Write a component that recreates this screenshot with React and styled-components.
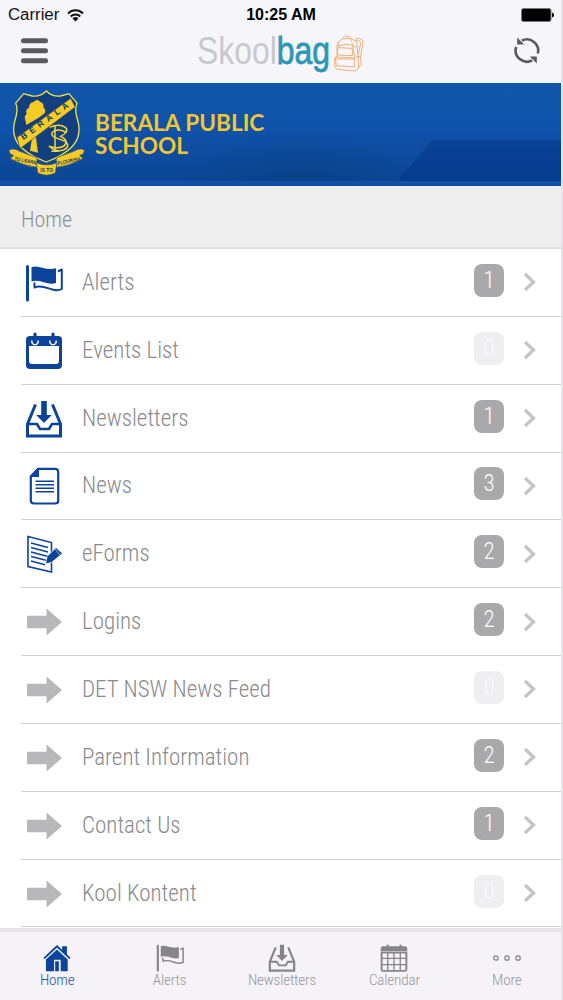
import styled, { createGlobalStyle } from 'styled-components';

const items = [
    { title: 'Alerts', icon: 'flag', count: 1 },
    { title: 'Events List', icon: 'events', count: 0 },
    { title: 'Newsletters', icon: 'inbox', count: 1 },
    { title: 'News', icon: 'page', count: 3 },
    { title: 'eForms', icon: 'form', count: 2 },
    { title: 'Logins', icon: 'arrow', count: 2 },
    { title: 'DET NSW News Feed', icon: 'arrow', count: 0 },
    { title: 'Parent Information', icon: 'arrow', count: 2 },
    { title: 'Contact Us', icon: 'arrow', count: 1 },
    { title: 'Kool Kontent', icon: 'arrow', count: 0 },
];

const tabs = [
    { title: 'Home', icon: 'home', active: true },
    { title: 'Alerts', icon: 'flag' },
    { title: 'Newsletters', icon: 'inbox' },
    { title: 'Calendar', icon: 'calendar' },
    { title: 'More', icon: 'more' },
];

const GlobalStyle = createGlobalStyle`
  * { box-sizing: border-box; }
  body {
    margin: 0;
    background: #fff;
    font-family: 'Roboto Condensed', Roboto, sans-serif;
    font-stretch: 75%;
    font-weight: 300;
    overflow: hidden;
  }
  svg { display: block; flex: none; }
`;

const Screen = styled.div`
  width: 563px;
  height: 1000px;
  display: flex;
  flex-direction: column;
  border-right: 2px solid #e6e4e7;
  overflow: hidden;
`;

const StatusBar = styled.div`
  height: 30px;
  flex: none;
  display: grid;
  grid-template-columns: 1fr auto 1fr;
  align-items: center;
  padding: 0 7px 0 8px;
  background: #f6f5f9;
  color: #111;
  font-family: 'Liberation Sans', sans-serif;
  font-stretch: normal;
  font-weight: 400;
  font-size: 16.8px;
`;

const Carrier = styled.div`
  display: flex;
  align-items: center;
  gap: 8px;
`;

const Clock = styled.div`
  font-family: 'Liberation Sans', sans-serif;
  font-weight: 600;
  font-size: 16px;
  color: #000;
`;

const Battery = styled.div`
  justify-self: end;
`;

const NavBar = styled.div`
  height: 53px;
  flex: none;
  display: grid;
  grid-template-columns: 1fr auto 1fr;
  align-items: start;
  padding: 0 20px 0 21px;
  background: #f6f5f9;
`;

const MenuButton = styled.div`
  padding-top: 8px;
`;

const RefreshButton = styled.div`
  padding-top: 6px;
  justify-self: end;
`;

const Brand = styled.div`
  display: flex;
  align-items: flex-start;
  gap: 3px;
  svg { margin-top: 5px; }
`;

const BrandText = styled.div`
  width: 133px;
  height: 44px;
  font-family: 'Liberation Sans', sans-serif;
  font-stretch: normal;
  font-weight: 400;
  font-size: 38px;
  line-height: 42px;
  white-space: nowrap;
  color: #c9c8cc;
  b {
    font-weight: 400;
    color: #2d97b7;
    -webkit-text-stroke: 0.8px #2d97b7;
  }
`;

const Narrow = styled.span`
  display: inline-block;
  transform: scaleX(${props => props.$scale});
  transform-origin: 0 50%;
`;

const Banner = styled.div`
  height: 103px;
  flex: none;
  display: flex;
  padding: 5px 0 0 8px;
  gap: 9px;
  border-bottom: 5px solid #1150a8;
  background:
    linear-gradient(130.5deg, transparent 72.4%, rgba(0, 45, 130, 0.4) 72.6%) 0 100% / 100% 41px no-repeat,
    radial-gradient(ellipse 120px 50px at 300px 98px, rgba(5, 55, 115, 0.35), transparent),
    linear-gradient(180deg, #1156aa 0%, #0f52aa 45%, #0c4694 100%);
`;

const SchoolName = styled.div`
  padding-top: 24px;
  font-family: Lato, sans-serif;
  font-stretch: normal;
  font-weight: 700;
  font-size: 22.6px;
  line-height: 22.5px;
  color: #f2c62e;
`;

const SectionTitle = styled.div`
  height: 63px;
  flex: none;
  display: flex;
  align-items: center;
  padding: 5px 0 0 21px;
  background: #efeeef;
  border-bottom: 2px solid #e0dfe0;
  color: #8f8e91;
  font-size: 22px;
`;

const List = styled.div`
  flex: 1;
  min-height: 0;
  overflow: hidden;
  padding-left: 21px;
  background: #fff;
`;

const Row = styled.div`
  height: 67.85px;
  display: flex;
  align-items: center;
  border-bottom: 1px solid #d3d2d4;
  padding-right: 25px;
  color: #8b8a8d;
`;

const RowIcon = styled.div`
  width: 61px;
  padding: 1px 0 0 4px;
  color: ${props => props.$grey ? '#b8b7b9' : '#0c439b'};
`;

const RowLabel = styled.div`
  flex: 1;
  font-size: 23px;
`;

const Badge = styled.div`
  width: 30px;
  height: 33px;
  margin: 0 19px 4px 0;
  border-radius: 8px;
  display: flex;
  align-items: center;
  justify-content: center;
  background: ${props => props.$empty ? '#efeef0' : '#a9a8aa'};
  color: ${props => props.$empty ? '#fbfbfc' : '#fff'};
  font-size: 23px;
`;

const TabBar = styled.div`
  height: 72px;
  width: 563px;
  flex: none;
  display: grid;
  grid-template-columns: repeat(5, 1fr);
  padding-left: 1px;
  background: #f5f3f7;
  border-top: 4px solid #e5e4e7;
`;

const Tab = styled.div`
  display: flex;
  flex-direction: column;
  align-items: center;
  padding-top: 12px;
  font-size: 15.2px;
  letter-spacing: -0.2px;
  line-height: 16px;
  color: ${props => props.$active ? '#2458a6' : '#98979b'};
  svg { color: ${props => props.$active ? '#0c439b' : '#868589'}; }
`;

const Icon = ({ name, size = 38 }) => (
    <svg width={size} height={size} viewBox="0 0 38 38" fill="none" stroke="currentColor">
        {name === 'flag' && (
            <>
                <path d="M2.5 2.500v33.500" strokeWidth="3" strokeLinecap="round" />
                <path d="M6.500 3.200c7-3 14 4 24.500 1v14.800c-9 3-15-4.500-24.500-1.500z" fill="currentColor" stroke="none" />
                <path d="M33 7.500l3.800-2v19.500c-9 5-17-6-27.300-1.500v-5" strokeWidth="2" strokeLinejoin="round" />
            </>
        )}
        {name === 'events' && (
            <>
                <path d="M5 4h28a4 4 0 0 1 4 4v25a4 4 0 0 1-4 4H5a4 4 0 0 1-4-4V8a4 4 0 0 1 4-4zM4 14v15q0 3 3 3h24q3 0 3-3V14z" fill="currentColor" fillRule="evenodd" stroke="none" />
                <path d="M7 8.500a3.200 3.200 0 1 0 6 0M25 8.500a3.200 3.200 0 1 0 6 0" stroke="#fff" strokeWidth="1.500" />
                <path d="M10 2v8M28 2v8" strokeWidth="3.200" strokeLinecap="round" />
            </>
        )}
        {name === 'inbox' && (
            <>
                <path d="M10.500 4.500L2.500 24v12h33V24L27.500 4.500" strokeWidth="3" />
                <path d="M2.500 24H12l3 5h9l3-5h8.500" strokeWidth="2.600" />
                <path d="M16.200 1h5.600v14h5L19 23l-7.800-8h5z" fill="currentColor" stroke="none" />
            </>
        )}
        {name === 'page' && (
            <>
                <path d="M13 1.800h17q3.200 0 3.200 3.200v29q0 2.500-3.200 2.500H9q-3.200 0-3.200-3V9.500z" strokeWidth="2.200" />
                <path d="M14 1v9H5z" fill="currentColor" stroke="none" />
                <path d="M10.500 14.200h18.500M10.500 17.700h18.500M10.500 21.200h18.500M10.500 24.700h18.500" strokeWidth="1.400" />
            </>
        )}
        {name === 'form' && (
            <>
                <path d="M3 1.500l23.500 6V37L3 31.500z" strokeWidth="1.600" />
                <path d="M6 8l17 4.500M6 12.500l17 4.500M6 17l17 4.500M6 21.500l16 4M6 26l14 3.800" strokeWidth="1.600" />
                <path d="M31 12.500l6.500 6-11 9-6 1.500 1.500-7.500z" fill="currentColor" stroke="#fff" strokeWidth="0.800" />
                <path d="M30 14l5 6" stroke="#fff" strokeWidth="0.600" />
            </>
        )}
        {name === 'arrow' && (
            <path d="M2 12.800h19.500V5.500L37 19 21.500 32.500v-7.300H2z" fill="currentColor" stroke="none" />
        )}
        {name === 'home' && (
            <>
                <path d="M26 3h6.500v13L26 10z" fill="currentColor" stroke="none" />
                <path d="M1.500 19.500L19 3l17.500 16.500" strokeWidth="2.600" />
                <path d="M19 7.500L33.500 21v16H24V21.500h-9V37H4V21z" fill="currentColor" stroke="none" />
                <path d="M16.500 23.500h5V37h-5z" fill="currentColor" stroke="none" />
            </>
        )}
        {name === 'calendar' && (
            <>
                <path d="M4 3h30a3 3 0 0 1 3 3v3.500H1V6a3 3 0 0 1 3-3z" fill="currentColor" stroke="none" />
                <path d="M10.500 1v4M28 1v4" strokeWidth="3" />
                <path d="M2.200 11.500h33.600v23q0 2-2 2H4.200q-2 0-2-2z" strokeWidth="2.600" />
                <path d="M2 19.500h34M2 28h34M10.500 12v24M19 12v24M27.500 12v24" strokeWidth="1.800" />
            </>
        )}
        {name === 'more' && (
            <g strokeWidth="1.700">
                <circle cx="4" cy="19" r="3" />
                <circle cx="19" cy="19" r="3" />
                <circle cx="34" cy="19" r="3" />
            </g>
        )}
    </svg>
);

const Chevron = () => (
    <svg width="13" height="20" viewBox="0 0 13 20" fill="none" stroke="#c4c3c5" strokeWidth="3.200">
        <path d="M2 2l8.500 8L2 18" />
    </svg>
);

const Wifi = () => (
    <svg width="17" height="13" viewBox="0 0 17 13" fill="none" stroke="#111" strokeWidth="2">
        <path d="M1 4.500a10.500 10.500 0 0 1 15 0M3.700 7.500a6.800 6.800 0 0 1 9.600 0" />
        <path d="M8.500 12.500L5.500 9.500a4.300 4.300 0 0 1 6 0z" fill="#111" stroke="none" />
    </svg>
);

const Backpack = () => (
    <svg width="32" height="37" viewBox="0 0 96 111" fill="none" stroke="#eeb07a" strokeWidth="3" strokeLinejoin="round">
        <path d="M12 32q2-20 28-22 26 0 32 16l5 72q-2 10-14 10l-50-5q-8-3-8-12V70l7-6z" />
        <path d="M30 9q2-7 12-6t12 7M14 34q24-10 44-4l12 8" />
        <path d="M66 12q22-6 24 10l-6 34q-2 8-10 10M66 17q16-2 17 8l-7 32" />
        <path d="M14 38l44 2v22l-44-2zM7 66l57 3v27l-54-4zM9 72h54M58 30l8 40M70 66l12-2 3 26-10 9" />
        <path d="M18 18l-3 18M54 12l8 26" strokeWidth="2" />
    </svg>
);

const Refresh = () => (
    <svg width="28" height="29" viewBox="0 0 28 29" fill="none" stroke="#5a595b" strokeWidth="2.600">
        <path d="M8.800 4.600A11.300 11.300 0 0 1 24.800 17.500" />
        <path d="M19.200 24.400A11.300 11.300 0 0 1 3.200 11" />
        <path d="M4.200 1.500v7h7z" fill="#5a595b" stroke="none" />
        <path d="M23.800 27.500v-7h-7z" fill="#5a595b" stroke="none" />
    </svg>
);

const Crest = () => (
    <svg width="78" height="92" viewBox="24 24 234 276">
        <path d="M139 33q18 18 43 15l25-7 24 28q-9 20 3 55 12 48-22 80-25 24-73 42-48-18-73-42-34-32-22-80 12-35 3-55l24-28 25 7q25 3 43-15z" fill="#123f7d" stroke="#f0df4e" strokeWidth="4" />
        <path d="M76 120q-5-12 4-18-5-14 7-18 0-16 14-18 10-12 20 0 12 4 9 16 9 8 4 18l-18 13-37 22z" fill="#f5cb24" />
        <path d="M96 174l-6 38 24 6-7-52z" fill="#f5cb24" />
        <path d="M51 172L212 55l14 26L60 206z" fill="#f5cb24" stroke="#173b70" strokeWidth="2" />
        <text x="70" y="180" transform="rotate(-36 70 180)" textLength="170" fill="#12396e" fontFamily="Liberation Sans, sans-serif" fontWeight="bold" fontSize="25">BERALA</text>
        <g fill="none" stroke="#f2d740" strokeWidth="4.500">
            <path d="M149 142q28-13 47 0 13 13-14 27 26 12 10 29-18 10-46 1M165 138v76M154 214h22" />
            <path d="M200 158q-17-12-36-6-18 10 0 20l32 12q18 16-8 27-24 4-37-10" />
        </g>
        <path d="M27 210q14-8 32 4l52 19v29q-38-4-80-26l10-10q-14-2-14-16zM253 210q-14-8-32 4l-52 19v29q38-4 80-26l-10-10q14-2 14-16z" fill="#f5cb24" stroke="#274e74" strokeWidth="2" />
        <path d="M109 248q31 13 62 0l-5 31q-26 13-53 0z" fill="#f5cb24" stroke="#274e74" strokeWidth="2" />
        <g fill="#173b60" fontFamily="Liberation Sans, sans-serif" fontWeight="bold" fontSize="16">
            <text x="43" y="241" textLength="66" lengthAdjust="spacingAndGlyphs" transform="rotate(11 43 241)">TO LEARN</text>
            <text x="121" y="276" textLength="38" lengthAdjust="spacingAndGlyphs">IS TO</text>
            <text x="173" y="255" textLength="70" lengthAdjust="spacingAndGlyphs" transform="rotate(-11 173 255)">FLOURISH</text>
        </g>
    </svg>
);

const App = () => {
    return (
        <Screen>
            <GlobalStyle />
            <StatusBar>
                <Carrier>Carrier <Wifi /></Carrier>
                <Clock>10:25 AM</Clock>
                <Battery>
                    <svg width="33" height="14" viewBox="0 0 33 14">
                        <rect x="0.500" y="0.500" width="29.500" height="13" rx="2" fill="#000" stroke="#77767a" />
                        <path d="M31 4.500q2 .5 2 2.500t-2 2.500z" fill="#000" />
                    </svg>
                </Battery>
            </StatusBar>
            <NavBar>
                <MenuButton>
                    <svg width="27" height="26" viewBox="0 0 27 26" stroke="#5a595b" strokeWidth="5" strokeLinecap="round">
                        <path d="M2.500 2.700h22M2.500 12.700h22M2.500 22.700h22" />
                    </svg>
                </MenuButton>
                <Brand>
                    <BrandText><Narrow $scale={0.84}>Skool<b>bag</b></Narrow></BrandText>
                    <Backpack />
                </Brand>
                <RefreshButton><Refresh /></RefreshButton>
            </NavBar>
            <Banner>
                <Crest />
                <SchoolName>BERALA PUBLIC<br />SCHOOL</SchoolName>
            </Banner>
            <SectionTitle>Home</SectionTitle>
            <List>
                {items.map(item => (
                    <Row key={item.title}>
                        <RowIcon $grey={item.icon === 'arrow'}>
                            <Icon name={item.icon} />
                        </RowIcon>
                        <RowLabel>{item.title}</RowLabel>
                        <Badge $empty={item.count === 0}>{item.count}</Badge>
                        <Chevron />
                    </Row>
                ))}
            </List>
            <TabBar>
                {tabs.map(tab => (
                    <Tab key={tab.title} $active={tab.active}>
                        <Icon name={tab.icon} size={28} />
                        {tab.title}
                    </Tab>
                ))}
            </TabBar>
        </Screen>
    );
};

export default App;
